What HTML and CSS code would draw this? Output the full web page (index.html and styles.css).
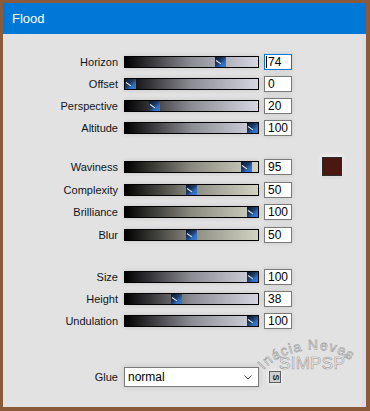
FILE: index.html
```html
<!DOCTYPE html>
<html>
<head>
<meta charset="utf-8">
<link rel="stylesheet" href="styles.css">
</head>
<body>
<div class="window">
  <div class="titlebar">Flood</div>
  <div class="panel">
    <div class="group g1">
      <div class="row"><span class="lbl">Horizon</span><div class="slider cool"><span class="thumb" style="left:90px"></span></div><span class="num focus"><span class="caret"></span>74</span></div>
      <div class="row"><span class="lbl">Offset</span><div class="slider cool"><span class="thumb" style="left:0px"></span></div><span class="num">0</span></div>
      <div class="row"><span class="lbl">Perspective</span><div class="slider cool"><span class="thumb" style="left:24px"></span></div><span class="num">20</span></div>
      <div class="row"><span class="lbl">Altitude</span><div class="slider cool"><span class="thumb" style="left:122px"></span></div><span class="num">100</span></div>
    </div>
    <div class="group g2">
      <div class="row"><span class="lbl">Waviness</span><div class="slider warm"><span class="thumb" style="left:116px"></span></div><span class="num">95</span><span class="swatch"></span></div>
      <div class="row"><span class="lbl">Complexity</span><div class="slider warm"><span class="thumb" style="left:61px"></span></div><span class="num">50</span></div>
      <div class="row"><span class="lbl">Brilliance</span><div class="slider warm"><span class="thumb" style="left:122px"></span></div><span class="num">100</span></div>
      <div class="row"><span class="lbl">Blur</span><div class="slider warm"><span class="thumb" style="left:61px"></span></div><span class="num">50</span></div>
    </div>
    <div class="group g3">
      <div class="row"><span class="lbl">Size</span><div class="slider cool"><span class="thumb" style="left:122px"></span></div><span class="num">100</span></div>
      <div class="row"><span class="lbl">Height</span><div class="slider cool"><span class="thumb" style="left:46px"></span></div><span class="num">38</span></div>
      <div class="row"><span class="lbl">Undulation</span><div class="slider cool"><span class="thumb" style="left:122px"></span></div><span class="num">100</span></div>
    </div>
    <div class="group glue">
      <div class="row"><span class="lbl">Glue</span>
        <div class="select"><span>normal</span>
          <svg class="chev" width="8" height="5" viewBox="0 0 8 5"><path d="M0.5 0.5 L4 4 L7.5 0.5" fill="none" stroke="#555" stroke-width="1"/></svg>
        </div>
        <span class="sbtn"><span class="sglyph">S</span></span>
      </div>
    </div>
  </div>
  <svg class="mark" width="370" height="411" viewBox="0 0 370 411">
    <defs>
      <path id="arc" d="M 264 370 C 278 352, 326 338, 355 364"/>
    </defs>
    <text class="marktext arc"><textPath href="#arc" textLength="94">Inácia Neves</textPath></text>
    <text class="marktext big" x="279" y="369">SIMPSP</text>
    <circle cx="346" cy="356" r="2" fill="none" stroke="#9a9a9a" stroke-width="0.8"/>
  </svg>
</div>
</body>
</html>
```

FILE: styles.css
```css
body {
  margin: 0;
  width: 370px;
  height: 411px;
  overflow: hidden;
  font-family: "Liberation Sans", Arial, sans-serif;
}

.window {
  position: relative;
  width: 370px;
  height: 411px;
  box-sizing: border-box;
  background: #8b5a3b;
  padding: 3px 4px 4px 3px;
  display: flex;
  flex-direction: column;
}

.titlebar {
  height: 31px;
  flex: none;
  background: #0078d7;
  color: #fff;
  font-size: 13px;
  display: flex;
  align-items: center;
  padding-left: 9px;
}

.panel {
  flex: 1;
  background: #e2e2e2;
  border-right: 4px solid #dcdde6;
  padding-top: 16.5px;
}

.group {
  display: flex;
  flex-direction: column;
}

.g2 { margin-top: 17px; }
.g3 { margin-top: 19.75px; }
.glue { margin-top: 34px; }

.row {
  display: flex;
  align-items: center;
  height: 22px;
}

.g2 .row { height: 22.7px; }

.lbl {
  width: 115px;
  margin-right: 6px;
  text-align: right;
  font-size: 11px;
  color: #0e1420;
}

.slider {
  position: relative;
  width: 135px;
  height: 12px;
  box-sizing: border-box;
  border: 1px solid #000;
  box-shadow: 0 0 5px rgba(0, 0, 0, 0.12);
}

.cool { background: linear-gradient(to right, #000 0%, #8c8c94 50%, #d6d6e2 100%); }
.warm { background: linear-gradient(to right, #000 0%, #8a8a80 50%, #d3d3c3 100%); }

.thumb {
  position: absolute;
  top: 0;
  bottom: 0;
  width: 11px;
  background: linear-gradient(135deg, #0c1628 0%, #1d3b66 45%, #2f6fc4 70%, #3a7bd0 100%);
}

.thumb::before {
  content: "";
  position: absolute;
  left: 1px;
  top: 3px;
  width: 6px;
  height: 1px;
  background: #e8eef8;
  transform: rotate(35deg);
  transform-origin: left center;
}

.num {
  margin-left: 5px;
  width: 28px;
  height: 16px;
  box-sizing: border-box;
  border: 1px solid #7a7a7a;
  background: #fff;
  font-size: 12px;
  line-height: 14px;
  padding-left: 3px;
  color: #000;
  display: flex;
  align-items: center;
  box-shadow: 0 0 5px rgba(0, 0, 0, 0.12);
}

.num.focus {
  border-color: #0078d7;
  padding-left: 1px;
}

.caret {
  width: 1px;
  height: 12px;
  background: #000;
  margin-right: 1px;
}

.swatch {
  margin-left: 30px;
  width: 20px;
  height: 19px;
  box-sizing: border-box;
  background: #4a1711;
  border: 1px solid #2b2b2b;
  box-shadow: 0 0 4px 1px rgba(255, 255, 255, 0.9), 0 1px 3px rgba(0, 0, 0, 0.3);
}

.select {
  width: 135px;
  height: 20px;
  box-sizing: border-box;
  border: 1px solid #7a7a7a;
  background: #fff;
  font-size: 12px;
  padding: 0 6px 0 3px;
  display: flex;
  align-items: center;
  justify-content: space-between;
  color: #000;
  box-shadow: 0 0 6px rgba(0, 0, 0, 0.14);
}

.chev { display: block; }

.sbtn {
  margin-left: 10px;
  width: 12px;
  height: 12px;
  box-sizing: border-box;
  border: 1px solid #5e5e5e;
  background: #d0d0d0;
  display: flex;
  align-items: center;
  justify-content: center;
  box-shadow: 0 0 4px rgba(255, 255, 255, 0.9);
}

.sglyph {
  font-size: 9px;
  font-weight: bold;
  color: #222;
  transform: rotate(90deg);
  line-height: 9px;
}

.mark {
  position: absolute;
  left: 0;
  top: 0;
  pointer-events: none;
}

.marktext {
  fill: #f6f6f6;
  stroke: #999;
  stroke-width: 0.6px;
  font-family: "Liberation Sans", Arial, sans-serif;
}

.arc { font-size: 14px; }
.big { font-size: 17px; letter-spacing: 0.3px; }
```
